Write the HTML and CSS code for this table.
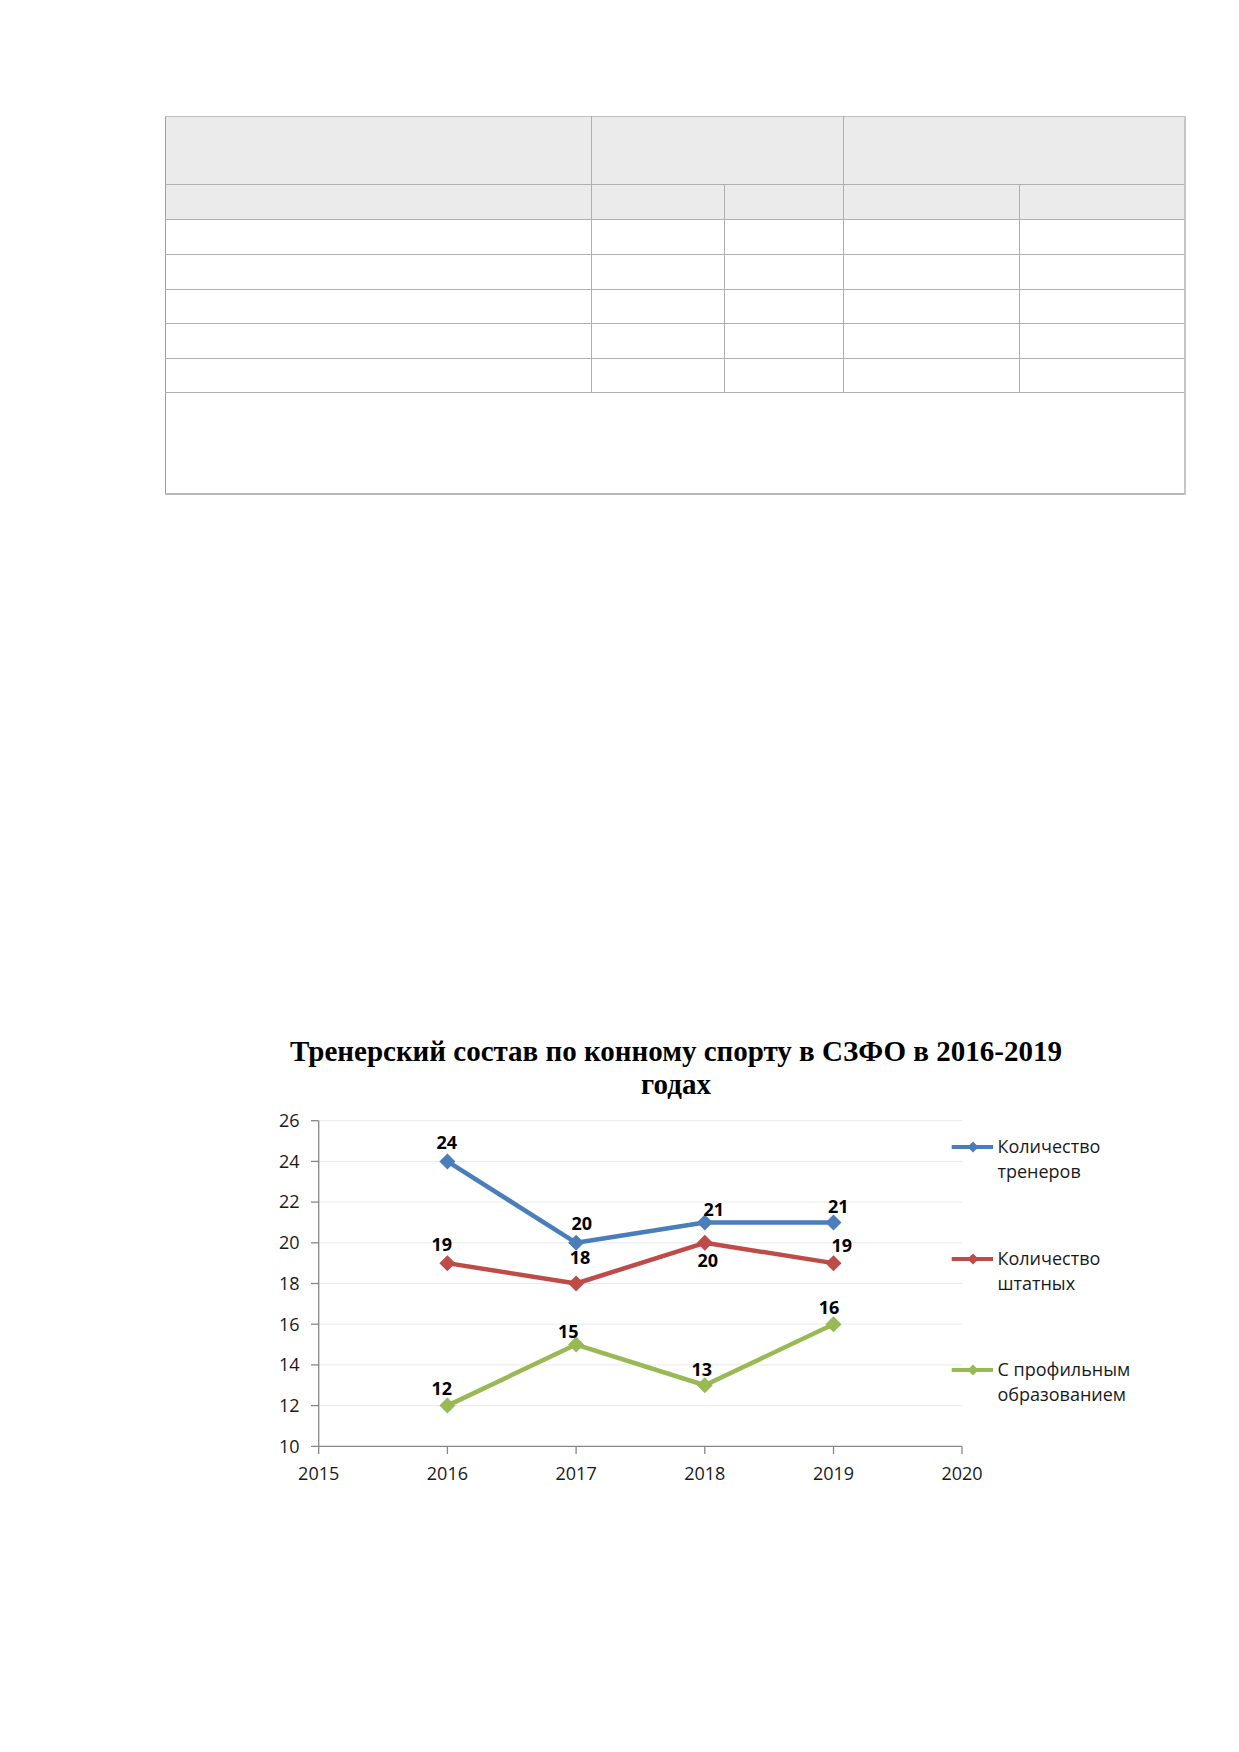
FILE: index.html
```html
<!DOCTYPE html>
<html lang="ru">
<head>
<meta charset="utf-8">
<title>Тренерский состав</title>
<link rel="stylesheet" href="styles.css">
</head>
<body>
<div class="page">
  <table class="grid">
    <colgroup>
      <col class="c1"><col class="c2"><col class="c3"><col class="c4"><col class="c5">
    </colgroup>
    <tr class="head1"><td class="hd"></td><td class="hd" colspan="2"></td><td class="hd last" colspan="2"></td></tr>
    <tr class="row"><td class="hd"></td><td class="hd"></td><td class="hd"></td><td class="hd"></td><td class="hd last"></td></tr>
    <tr class="row"><td></td><td></td><td></td><td></td><td class="last"></td></tr>
    <tr class="row"><td></td><td></td><td></td><td></td><td class="last"></td></tr>
    <tr class="row r34"><td></td><td></td><td></td><td></td><td class="last"></td></tr>
    <tr class="row"><td></td><td></td><td></td><td></td><td class="last"></td></tr>
    <tr class="row r34"><td></td><td></td><td></td><td></td><td class="last"></td></tr>
    <tr class="foot"><td class="last" colspan="5"></td></tr>
  </table>

  <figure class="chart">
    <h2 class="chart-title">Тренерский состав по конному спорту в СЗФО в 2016-2019<br>годах</h2>
    <svg class="plot" width="900" height="410" viewBox="260 1100 900 410" xmlns="http://www.w3.org/2000/svg">
      <g class="gridlines" stroke="#e9e9e9" stroke-width="1">
        <line x1="319" y1="1119.7" x2="962" y2="1119.7"/>
        <line x1="319" y1="1160.4" x2="962" y2="1160.4"/>
        <line x1="319" y1="1201.1" x2="962" y2="1201.1"/>
        <line x1="319" y1="1241.8" x2="962" y2="1241.8"/>
        <line x1="319" y1="1282.5" x2="962" y2="1282.5"/>
        <line x1="319" y1="1323.2" x2="962" y2="1323.2"/>
        <line x1="319" y1="1363.9" x2="962" y2="1363.9"/>
        <line x1="319" y1="1404.6" x2="962" y2="1404.6"/>
      </g>
      <g class="axes" stroke="#878787" stroke-width="1.3">
        <line x1="318.7" y1="1119.7" x2="318.7" y2="1453"/>
        <line x1="311" y1="1445.3" x2="962" y2="1445.3"/>
        <line x1="311" y1="1119.7" x2="318.7" y2="1119.7"/>
        <line x1="311" y1="1160.4" x2="318.7" y2="1160.4"/>
        <line x1="311" y1="1201.1" x2="318.7" y2="1201.1"/>
        <line x1="311" y1="1241.8" x2="318.7" y2="1241.8"/>
        <line x1="311" y1="1282.5" x2="318.7" y2="1282.5"/>
        <line x1="311" y1="1323.2" x2="318.7" y2="1323.2"/>
        <line x1="311" y1="1363.9" x2="318.7" y2="1363.9"/>
        <line x1="311" y1="1404.6" x2="318.7" y2="1404.6"/>
        <line x1="447.4" y1="1445.3" x2="447.4" y2="1453"/>
        <line x1="576.1" y1="1445.3" x2="576.1" y2="1453"/>
        <line x1="704.8" y1="1445.3" x2="704.8" y2="1453"/>
        <line x1="833.5" y1="1445.3" x2="833.5" y2="1453"/>
        <line x1="962" y1="1445.3" x2="962" y2="1453"/>
      </g>
      <g class="ylab">
        <text x="299.5" y="1126">26</text>
        <text x="299.5" y="1166.7">24</text>
        <text x="299.5" y="1207.4">22</text>
        <text x="299.5" y="1248.1">20</text>
        <text x="299.5" y="1288.8">18</text>
        <text x="299.5" y="1329.5">16</text>
        <text x="299.5" y="1370.2">14</text>
        <text x="299.5" y="1410.9">12</text>
        <text x="299.5" y="1451.6">10</text>
      </g>
      <g class="xlab">
        <text x="318.7" y="1479">2015</text>
        <text x="447.4" y="1479">2016</text>
        <text x="576.1" y="1479">2017</text>
        <text x="704.8" y="1479">2018</text>
        <text x="833.5" y="1479">2019</text>
        <text x="962" y="1479">2020</text>
      </g>

      <g class="series s-blue">
        <polyline points="447.4,1160.4 576.1,1241.8 704.8,1221.45 833.5,1221.45"/>
        <path d="M447.4 1152.4l8 8-8 8-8-8z M576.1 1233.8l8 8-8 8-8-8z M704.8 1213.45l8 8-8 8-8-8z M833.5 1213.45l8 8-8 8-8-8z"/>
      </g>
      <g class="series s-red">
        <polyline points="447.4,1262.15 576.1,1282.5 704.8,1241.8 833.5,1262.15"/>
        <path d="M447.4 1254.15l8 8-8 8-8-8z M576.1 1274.5l8 8-8 8-8-8z M704.8 1233.8l8 8-8 8-8-8z M833.5 1254.15l8 8-8 8-8-8z"/>
      </g>
      <g class="series s-green">
        <polyline points="447.4,1404.6 576.1,1343.55 704.8,1384.25 833.5,1323.2"/>
        <path d="M447.4 1396.6l8 8-8 8-8-8z M576.1 1335.55l8 8-8 8-8-8z M704.8 1376.25l8 8-8 8-8-8z M833.5 1315.2l8 8-8 8-8-8z"/>
      </g>

      <g class="dlab">
        <text x="446.7" y="1148">24</text>
        <text x="581.7" y="1229">20</text>
        <text x="713.7" y="1215">21</text>
        <text x="838.3" y="1211.7">21</text>
        <text x="441.7" y="1250">19</text>
        <text x="580" y="1263.3">18</text>
        <text x="707.7" y="1266">20</text>
        <text x="841.7" y="1251">19</text>
        <text x="441.7" y="1394">12</text>
        <text x="568.3" y="1336.7">15</text>
        <text x="701.7" y="1375">13</text>
        <text x="829" y="1313.3">16</text>
      </g>

      <g class="legend">
        <g class="s-blue">
          <line x1="951.7" y1="1146" x2="993" y2="1146"/>
          <path d="M973 1140.5l5.5 5.5-5.5 5.5-5.5-5.5z"/>
        </g>
        <g class="s-red">
          <line x1="951.7" y1="1258" x2="993" y2="1258"/>
          <path d="M973 1252.5l5.5 5.5-5.5 5.5-5.5-5.5z"/>
        </g>
        <g class="s-green">
          <line x1="951.7" y1="1369" x2="993" y2="1369"/>
          <path d="M973 1363.5l5.5 5.5-5.5 5.5-5.5-5.5z"/>
        </g>
        <text class="ltext" x="997.5" y="1152">Количество</text>
        <text class="ltext" x="997.5" y="1176.7">тренеров</text>
        <text class="ltext" x="997.5" y="1264">Количество</text>
        <text class="ltext" x="997.5" y="1288.5">штатных</text>
        <text class="ltext" x="997.5" y="1375">С профильным</text>
        <text class="ltext" x="997.5" y="1400">образованием</text>
      </g>
    </svg>
  </figure>
</div>
</body>
</html>
```

FILE: styles.css
```css
html, body {
  margin: 0;
  padding: 0;
  background: #ffffff;
}

.page {
  padding-top: 116px;
  width: 1239px;
  min-height: 1752px;
  box-sizing: border-box;
}

.grid {
  margin-left: 165px;
  width: 1019px;
  border-collapse: collapse;
  table-layout: fixed;
  border-top: 1px solid #c2c2c2;
  border-left: 1px solid #9e9e9e;
  border-right: 2px solid #c6c6c6;
  border-bottom: 2px solid #b8b8b8;
}

.c1 { width: 426px; }
.c2 { width: 133px; }
.c3 { width: 119px; }
.c4 { width: 176px; }
.c5 { width: 165px; }

.grid td {
  border: 1px solid #b0b0b0;
  padding: 0;
  background: #ffffff;
}

.grid td.hd {
  background: #ebebeb;
}

.grid tr:first-child td {
  border-top-color: #c2c2c2;
}

.grid td:first-child {
  border-left-color: #9e9e9e;
}

.grid td.last {
  border-right: 2px solid #c6c6c6;
}

.head1 { height: 68px; }
.row { height: 35px; }
.row.r34 { height: 34px; }
.foot { height: 101px; }

.chart {
  margin: 540px 0 0 260px;
  width: 900px;
  padding: 0;
}

.chart-title {
  margin: 0;
  padding-right: 68px;
  font-family: "Liberation Serif", "Times New Roman", serif;
  font-weight: bold;
  font-size: 29px;
  line-height: 33px;
  text-align: center;
  color: #000000;
}

.plot {
  display: block;
}

.ylab text {
  font-family: "Open Sans", "Liberation Sans", sans-serif;
  font-size: 18px;
  fill: #1a1a1a;
  text-anchor: end;
}

.xlab text {
  font-family: "Open Sans", "Liberation Sans", sans-serif;
  font-size: 18px;
  fill: #1a1a1a;
  text-anchor: middle;
}

.dlab text {
  font-family: "Open Sans", "Liberation Sans", sans-serif;
  font-size: 18px;
  font-weight: bold;
  fill: #000000;
  text-anchor: middle;
}

.series polyline {
  fill: none;
  stroke-width: 4.5;
  stroke-linejoin: round;
}

.legend line {
  stroke-width: 4;
}

.s-blue polyline, .s-blue line { stroke: #4a7ebb; }
.s-blue path { fill: #4a7ebb; }
.s-red polyline, .s-red line { stroke: #be4b48; }
.s-red path { fill: #be4b48; }
.s-green polyline, .s-green line { stroke: #98b954; }
.s-green path { fill: #98b954; }

.ltext {
  font-family: "Open Sans", "Liberation Sans", sans-serif;
  font-size: 18px;
  fill: #1a1a1a;
}
```
